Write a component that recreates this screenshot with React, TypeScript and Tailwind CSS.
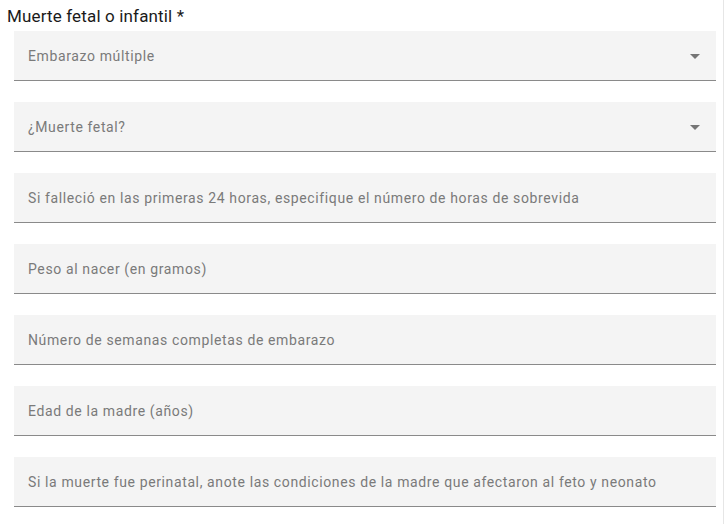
import React from 'react';

const fields = [
  { label: 'Embarazo múltiple', select: true },
  { label: '¿Muerte fetal?', select: true },
  { label: 'Si falleció en las primeras 24 horas, especifique el número de horas de sobrevida' },
  { label: 'Peso al nacer (en gramos)' },
  { label: 'Número de semanas completas de embarazo' },
  { label: 'Edad de la madre (años)' },
  { label: 'Si la muerte fue perinatal, anote las condiciones de la madre que afectaron al feto y neonato' },
];

const ArrowDown = () => (
  <svg width="10" height="5" viewBox="0 0 10 5" className="shrink-0">
    <path d="M0 0l5 5 5-5z" fill="#757575" />
  </svg>
);

export default function App() {
  return (
    <div className="h-screen w-[724px] bg-white border-r border-[#e6e6e6] font-['Roboto',sans-serif] px-[7px]">
      <div className="pt-[4px] text-[17px] tracking-[0.15px] leading-[24px] text-[#1a1a1a]">Muerte fetal o infantil *</div>
      <div className="ml-[7px] mt-[3px] flex flex-col gap-[21px]">
        {fields.map((f) => (
          <div
            key={f.label}
            className="h-[50px] bg-[#f4f4f4] border-b border-[#8a8a8a] flex items-center pl-[14px] pr-[16px] pt-[1px]"
          >
            <span className="flex-1 text-[14px] tracking-[0.62px] text-[#7a7a7a] whitespace-nowrap">{f.label}</span>
            {f.select && <ArrowDown />}
          </div>
        ))}
      </div>
    </div>
  );
}
